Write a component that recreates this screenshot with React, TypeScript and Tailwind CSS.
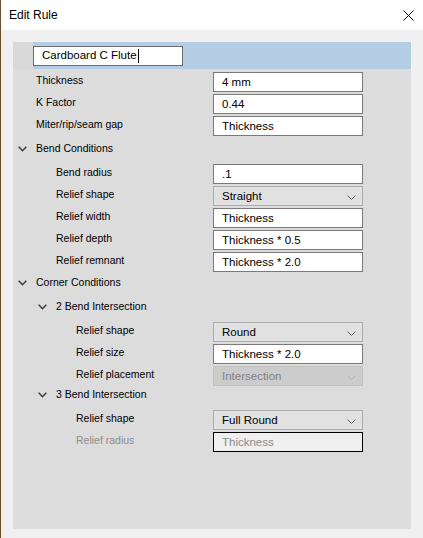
import React from "react";

const F = { fontFamily: '"Liberation Sans", Arial, sans-serif' };

function Chevron({ color = "#606060" }: { color?: string }) {
  return (
    <svg width="9" height="5" viewBox="0 0 9 5" className="absolute right-[6px] top-[8px]">
      <path d="M0.5 0.5 L4.5 4.5 L8.5 0.5" fill="none" stroke={color} strokeWidth="1" />
    </svg>
  );
}

function TreeChevron() {
  return (
    <svg width="9" height="6" viewBox="0 0 9 6" className="shrink-0">
      <path d="M0.7 0.7 L4.5 4.7 L8.3 0.7" fill="none" stroke="#404040" strokeWidth="1.6" />
    </svg>
  );
}

type Kind = "text" | "select" | "disabledSelect" | "readonly";

function Field({ kind, value }: { kind: Kind; value: string }) {
  if (kind === "text")
    return (
      <div className="relative h-[20px] w-[150px] border border-[#7a7a7a] bg-white pl-[8px] text-[11.5px] leading-[18px] text-black">
        {value}
      </div>
    );
  if (kind === "select")
    return (
      <div className="relative h-[20px] w-[150px] border border-[#adadad] bg-[#e1e1e1] pl-[8px] text-[11.5px] leading-[18px] text-black">
        {value}
        <Chevron />
      </div>
    );
  if (kind === "disabledSelect")
    return (
      <div className="relative h-[20px] w-[150px] border border-[#bfbfbf] bg-[#cccccc] pl-[8px] text-[11.5px] leading-[18px] text-[#838383]">
        {value}
        <Chevron color="#b0b0b0" />
      </div>
    );
  return (
    <div className="relative h-[20px] w-[150px] border border-black bg-[#f0f0f0] pl-[8px] text-[11.5px] leading-[18px] text-[#8a8a8a]">
      {value}
    </div>
  );
}

function Row({
  label,
  indent,
  kind,
  value,
  dim,
}: {
  label: string;
  indent: number;
  kind: Kind;
  value: string;
  dim?: boolean;
}) {
  return (
    <div className="flex h-[22px] items-start">
      <div
        className={`w-[200px] pt-[1px] text-[10.5px] leading-[14px] ${dim ? "text-[#8d8d8d]" : "text-black"}`}
        style={{ paddingLeft: indent }}
      >
        {label}
      </div>
      <Field kind={kind} value={value} />
    </div>
  );
}

function Heading({ label, chevX, textX, h, lt }: { label: string; chevX: number; textX: number; h: string; lt: string }) {
  return (
    <div className={`flex items-start ${h}`}>
      <div className={`flex items-center ${lt}`} style={{ paddingLeft: chevX }}>
        <TreeChevron />
        <span className="text-[10.5px] text-black" style={{ marginLeft: textX - chevX - 9 }}>
          {label}
        </span>
      </div>
    </div>
  );
}

export default function App() {
  return (
    <div className="h-[538px] w-[423px] overflow-hidden bg-[#f0f0f0] border-l border-[#6b4f2a]" style={F}>
      <div className="flex h-[30px] items-center justify-between bg-white pl-[8px] pr-[9px]">
        <span className="text-[12px] text-black">Edit Rule</span>
        <svg width="11" height="11" viewBox="0 0 11 11">
          <path d="M0.5 0.5 L10.5 10.5 M10.5 0.5 L0.5 10.5" stroke="#000" strokeWidth="1" />
        </svg>
      </div>
      <div className="ml-[12px] mt-[12px] h-[487px] w-[398px] bg-[#dcdcdc]">
        <div className="flex h-[27px]">
          <div className="w-[20px] bg-[#d9d9d9]" />
          <div className="flex-1 bg-[#b4cce4] pt-[4px]">
            <div className="flex h-[20px] w-[150px] items-center border border-[#6d6d6d] bg-white pl-[8px] text-[11.5px] text-black">
              Cardboard C Flute
              <span className="ml-[1px] inline-block h-[14px] w-[1px] bg-black" />
            </div>
          </div>
        </div>
        <div className="pt-[3px]">
          <Row label="Thickness" indent={23} kind="text" value="4 mm" />
          <Row label="K Factor" indent={23} kind="text" value="0.44" />
          <Row label="Miter/rip/seam gap" indent={23} kind="text" value="Thickness" />
          <Heading label="Bend Conditions" chevX={5} textX={23} h="h-[26px]" lt="h-[18px] mt-[2px]" />
          <Row label="Bend radius" indent={43} kind="text" value=".1" />
          <Row label="Relief shape" indent={43} kind="select" value="Straight" />
          <Row label="Relief width" indent={43} kind="text" value="Thickness" />
          <Row label="Relief depth" indent={43} kind="text" value="Thickness * 0.5" />
          <Row label="Relief remnant" indent={43} kind="text" value="Thickness * 2.0" />
          <Heading label="Corner Conditions" chevX={5} textX={23} h="h-[24px]" lt="h-[18px]" />
          <Heading label="2 Bend Intersection" chevX={25} textX={43} h="h-[24px]" lt="h-[18px]" />
          <Row label="Relief shape" indent={63} kind="select" value="Round" />
          <Row label="Relief size" indent={63} kind="text" value="Thickness * 2.0" />
          <Row label="Relief placement" indent={63} kind="disabledSelect" value="Intersection" />
          <Heading label="3 Bend Intersection" chevX={25} textX={43} h="h-[22px]" lt="h-[14px]" />
          <Row label="Relief shape" indent={63} kind="select" value="Full Round" />
          <Row label="Relief radius" indent={63} kind="readonly" value="Thickness" dim />
        </div>
      </div>
    </div>
  );
}
